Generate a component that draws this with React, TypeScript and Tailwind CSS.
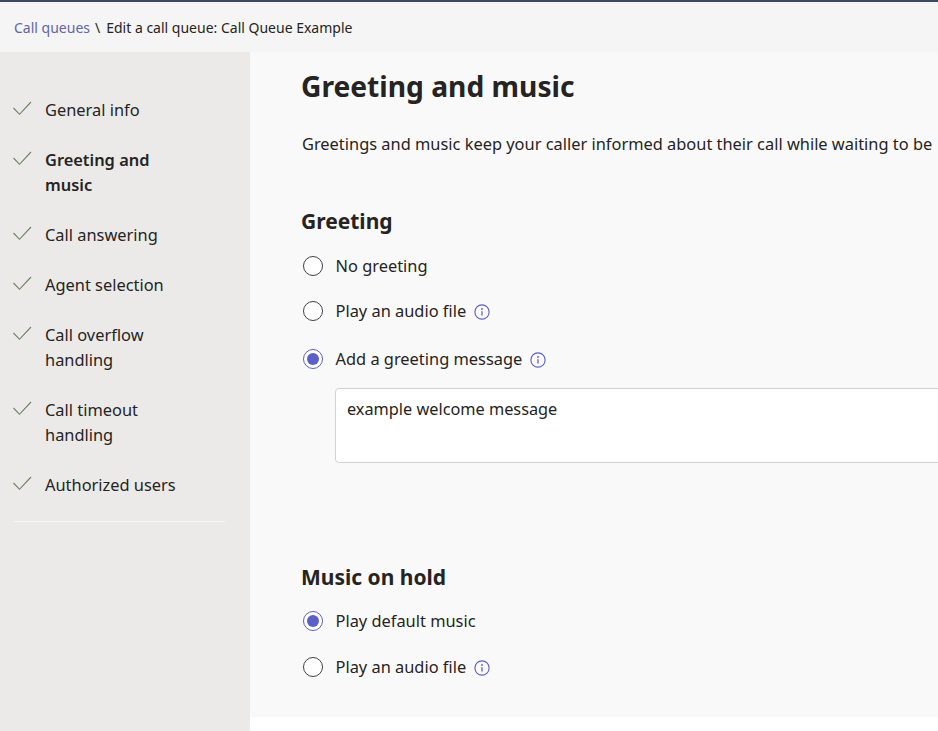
const font = "font-['Noto_Sans','Open_Sans',sans-serif]"

const steps = [
  { label: ['General info'] },
  { label: ['Greeting and', 'music'], active: true },
  { label: ['Call answering'] },
  { label: ['Agent selection'] },
  { label: ['Call overflow', 'handling'] },
  { label: ['Call timeout', 'handling'] },
  { label: ['Authorized users'] },
]

const Check = () => (
  <svg width="20" height="16" viewBox="0 0 20 16" fill="none" className="mt-[4px] shrink-0">
    <path d="M0.5 7 L6.5 13.3 L18 1" stroke="#6f7f63" strokeWidth="1.1" />
  </svg>
)

const InfoIcon = () => (
  <svg width="16" height="16" viewBox="0 0 16 16" fill="none" className="shrink-0">
    <circle cx="8" cy="8" r="7.1" stroke="#5b5fc7" strokeWidth="1.1" />
    <circle cx="8" cy="5" r="0.9" fill="#5b5fc7" />
    <path d="M8 7.2v4.4" stroke="#5b5fc7" strokeWidth="1.3" />
  </svg>
)

const Radio = ({ label, checked, info }: { label: string; checked?: boolean; info?: boolean }) => (
  <div className="ml-px flex items-center">
    <span
      className={`flex h-5 w-5 shrink-0 items-center justify-center rounded-full border-[1.5px] bg-white ${
        checked ? 'border-[#5b5fc7]' : 'border-[#424242]'
      }`}
    >
      {checked && <span className="h-3 w-3 rounded-full bg-[#5b5fc7]" />}
    </span>
    <span className="ml-[12.5px] text-[16.4px] leading-6 text-[#252423]">{label}</span>
    {info && (
      <span className="ml-2 mt-px">
        <InfoIcon />
      </span>
    )}
  </div>
)

export default function App() {
  return (
    <div className={`${font} flex h-[731px] w-[938px] flex-col overflow-hidden bg-white`}>
      <div className="h-[2px] shrink-0 bg-[#3a4a60]" />
      <div className="flex h-[50px] shrink-0 items-center bg-[#f5f5f5] pl-[14px] text-[14px] text-[#252423]">
        <span className="text-[#6264a7]">Call queues</span>
        <span className="ml-[5px] mr-[6px]">\</span>
        <span>Edit a call queue: Call Queue Example</span>
      </div>
      <div className="flex min-h-0 flex-1">
        <aside className="w-[250px] shrink-0 bg-[#ebeae9] pl-[13px] pt-[45px]">
          <div className="flex flex-col gap-[25px]">
            {steps.map((s) => (
              <div key={s.label[0]} className="flex">
                <Check />
                <div
                  className={`ml-[12px] text-[16.4px] leading-[25px] text-[#252423] ${s.active ? 'font-semibold' : ''}`}
                >
                  {s.label.map((l) => (
                    <div key={l}>{l}</div>
                  ))}
                </div>
              </div>
            ))}
          </div>
          <div className="ml-px mt-[24px] h-px w-[211px] bg-[#f7f6f6]" />
        </aside>
        <main className="h-[665px] min-w-0 flex-1 overflow-hidden whitespace-nowrap bg-[#faf9f9] pl-[52px]">
          <h1 className="-ml-px mt-[16px] text-[28.2px] font-bold leading-9 text-[#252423]">Greeting and music</h1>
          <p className="mt-[28px] text-[16.4px] leading-6 text-[#252423]">
            Greetings and music keep your caller informed about their call while waiting to be
          </p>
          <h2 className="-ml-px mt-[51px] text-[21px] font-bold leading-7 text-[#252423]">Greeting</h2>
          <div className="mt-[19px] flex flex-col">
            <Radio label="No greeting" />
            <div className="mt-[21px]">
              <Radio label="Play an audio file" info />
            </div>
            <div className="mt-[24px]">
              <Radio label="Add a greeting message" checked info />
            </div>
          </div>
          <div className="ml-[33px] mt-[17px] h-[75px] w-[760px] rounded border border-[#d1d1d1] bg-white px-[11px] py-[8px] text-[16.3px] leading-6 text-[#252423]">
            example welcome message
          </div>
          <h2 className="-ml-px mt-[100px] text-[21px] font-bold leading-7 text-[#252423]">Music on hold</h2>
          <div className="mt-[18px] flex flex-col gap-[22px]">
            <Radio label="Play default music" checked />
            <Radio label="Play an audio file" info />
          </div>
        </main>
      </div>
    </div>
  )
}
